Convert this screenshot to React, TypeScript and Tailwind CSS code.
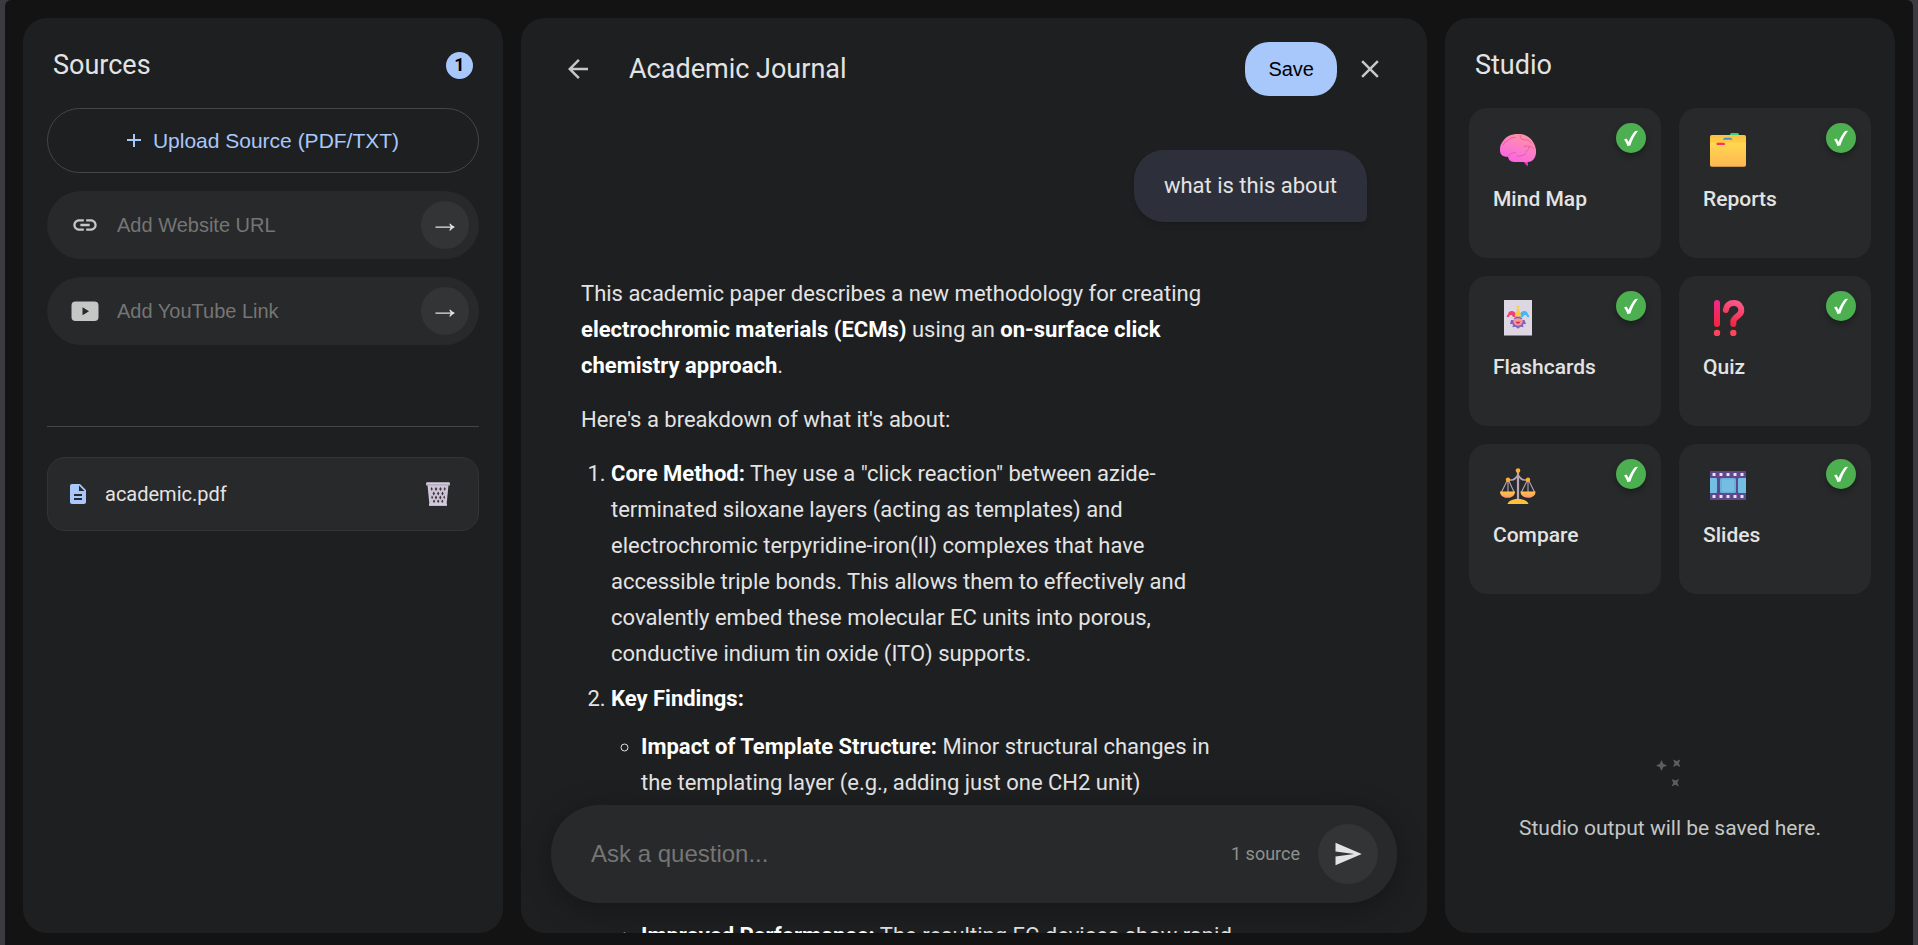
import { useState, type ReactNode } from 'react'

type StudioTool = { label: string; icon: ReactNode }

function BrainIcon() {
  return (
    <svg viewBox="0 0 36 36" className="size-9" aria-hidden="true">
      <defs>
        <linearGradient id="brain" x1="0.2" y1="1" x2="0.7" y2="0">
          <stop offset="0" stopColor="#fa62e4" />
          <stop offset="0.5" stopColor="#fc7cca" />
          <stop offset="1" stopColor="#ff93a2" />
        </linearGradient>
      </defs>
      <path d="M23 29l3.700 4.600c.6.600 1.200.3 1.200-.5V28z" fill="#e83fb8" />
      <path
        d="M18 2c4 0 7.500.8 10.500 3C32.500 8 35.500 13 36 18c.3 4-.5 7-2.500 9.500-1.500 1.700-3.500 2.500-5.500 2.500H14c-3.500 0-5.500-2-6-5.200-2.500.2-5-.5-6.500-2C0 21 0 19 0 17c0-3 1-5.500 3-8C6 4.500 11 2 18 2z"
        fill="url(#brain)"
      />
      <g fill="none" stroke="#d8498f" strokeOpacity="0.6" strokeLinecap="round">
        <path d="M3 13c1-3 3.500-3 5.500-5 1.500-2.200 4-3 7-2.500" />
        <path d="M8.500 24c1-3 4-2.500 7-3.500M17 24c4 .8 6-.5 9-2.500" />
        <path d="M20 3.500c0 3 2 4.500 5 4.300 3-.1 5 1.200 6.500 3.200" />
        <path d="M24 14.500c3-1 7-.5 9.500 2M29 15c-.2 2.500-1.500 4-3.500 5" />
      </g>
    </svg>
  )
}

function FolderIcon() {
  return (
    <svg viewBox="0 0 36 36" className="size-9" aria-hidden="true">
      <defs>
        <linearGradient id="folder" x1="0" y1="0" x2="0" y2="1">
          <stop offset="0" stopColor="#ffd94f" />
          <stop offset="1" stopColor="#ffb552" />
        </linearGradient>
      </defs>
      <rect x="20" y="1" width="9" height="5" rx="1.500" fill="#3fce7c" />
      <rect x="0" y="3" width="36" height="14" rx="1.800" fill="#f8c541" />
      <path d="M0 6h12l1.500 1.500h9L24 6.500h12v10H0z" fill="#ffc845" />
      <path d="M13 7.800c.3-1.300 1-2 2-2h5c1 0 2 .7 2.500 2z" fill="#3f8fd8" />
      <path d="M6 12.900c.3-1.500 1-2.200 2-2.200h5c1.300 0 2 .8 2.500 2.200z" fill="#f8335d" />
      <path
        d="M0 11.500c0-.6.500-1 1-1h4l2 2.400h7.500l2-2.400H35c.6 0 1 .4 1 1V33a1.800 1.800 0 0 1-1.800 1.800H1.800A1.800 1.800 0 0 1 0 33z"
        fill="url(#folder)"
      />
    </svg>
  )
}

function JokerIcon() {
  return (
    <svg viewBox="0 0 36 36" className="size-9" aria-hidden="true">
      <rect x="4" y="0" width="28" height="36" fill="#8c7b9f" />
      <rect x="4" y="0" width="28" height="35" fill="#dcd7e3" />
      <path d="M11 20h13.500l1.500 4-3 .3.500 3-3-.5-2.500 2-2.500-2-3 .5.500-3-3-.3z" fill="#8061c4" />
      <path d="M13 17c-1-3-3-2.500-4.500-.5-1.500-3.500 1-6 4-5.500 2.500.4 4 3 4 6z" fill="#f0407a" />
      <path d="M23 17c1-3 3-2.500 4.500-.5 1.500-3.500-1-6-4-5.500-2.500.4-4 3-4 6z" fill="#45b6f5" />
      <path d="M14.500 16.500L18 7l3.500 9.500z" fill="#f9cc3e" />
      <circle cx="18" cy="6.700" r="1.500" fill="#fbd34e" />
      <circle cx="8" cy="16" r="1.200" fill="#f0407a" />
      <circle cx="28" cy="16" r="1.200" fill="#45b6f5" />
      <circle cx="18" cy="21" r="4.700" fill="#f49a8e" />
      <path d="M13.500 18.500c2-2.300 7-2.300 9 0l-1 .4c-2-1-5-1-7 0z" fill="#8061c4" />
      <path d="M15.700 21.700h4.600c-.3 2.600-4.300 2.600-4.600 0z" fill="#d8265b" />
    </svg>
  )
}

function InterrobangIcon() {
  return (
    <svg viewBox="0 0 36 36" className="size-9" aria-hidden="true">
      <defs>
        <linearGradient id="bang" x1="0" y1="0" x2="0" y2="27" gradientUnits="userSpaceOnUse">
          <stop offset="0" stopColor="#f4288c" />
          <stop offset="1" stopColor="#f3263a" />
        </linearGradient>
        <linearGradient id="question" x1="30" y1="2" x2="20" y2="27" gradientUnits="userSpaceOnUse">
          <stop offset="0" stopColor="#fb5a8c" />
          <stop offset="1" stopColor="#f01f3c" />
        </linearGradient>
      </defs>
      <rect x="4" y="0" width="6" height="27" rx="3" fill="url(#bang)" />
      <path
        d="M15.800 10C16.500 5.500 19.500 3 24 3c4.500 0 7.300 3.300 7.300 7.500 0 6-8 5.500-8 11.500v2"
        fill="none"
        stroke="url(#question)"
        strokeWidth="6"
        strokeLinecap="round"
      />
      <circle cx="7" cy="33" r="3.200" fill="#ff4658" />
      <circle cx="23.300" cy="33" r="3.200" fill="#ff4658" />
    </svg>
  )
}

function ScalesIcon() {
  return (
    <svg viewBox="0 0 36 36" className="size-9" aria-hidden="true">
      <defs>
        <linearGradient id="pan" x1="0" y1="0" x2="0" y2="1">
          <stop offset="0" stopColor="#ffc83d" />
          <stop offset="1" stopColor="#ff9478" />
        </linearGradient>
      </defs>
      <g fill="none" stroke="#b9a3b5" strokeLinecap="round">
        <path d="M18 3v29" strokeWidth="2.200" />
        <path d="M8 12h3.500c3 0 4-1.500 6.500-5 2.500 3.500 3.500 5 6.500 5H28" strokeWidth="1.700" />
        <path
          d="M7.500 12L1.500 24M8 12v12M8.500 12l5.500 12M27.500 12l-6 12M28 12v12M28.500 12l6 12"
          strokeWidth="1.100"
        />
      </g>
      <circle cx="18" cy="2.500" r="2.300" fill="#ffae2e" />
      <circle cx="8" cy="11.800" r="2.200" fill="#ffae2e" />
      <circle cx="28" cy="11.800" r="2.200" fill="#ffae2e" />
      <path d="M0 23.500h15c0 4-3.200 6.300-7.500 6.300S0 27.500 0 23.500z" fill="url(#pan)" />
      <path d="M20.500 23.500h15c0 4-3.200 6.300-7.500 6.300s-7.500-2.300-7.500-6.300z" fill="url(#pan)" />
      <path d="M7.500 36c1-3.500 5.500-5 10.500-5s9.500 1.500 10.500 5z" fill="#ffc03a" />
    </svg>
  )
}

function FilmIcon() {
  const holes = [2, 9, 16, 23, 30]
  return (
    <svg viewBox="0 1 36 36" className="size-9" aria-hidden="true">
      <rect x="0" y="4" width="36" height="29" rx="0.800" fill="#60478a" />
      <path d="M0 11h5.500c1 0 1.500.5 1.500 1.500v12c0 1-.5 1.500-1.500 1.500H0z" fill="#72bfe6" />
      <rect x="10" y="11" width="16" height="15" rx="1.500" fill="#66b0dc" />
      <rect x="12" y="12.500" width="12" height="12" rx="1" fill="#76bde2" />
      <path d="M36 11h-6.500c-1 0-1.500.5-1.500 1.500v12c0 1 .5 1.500 1.500 1.500H36z" fill="#72bfe6" />
      {holes.map((x) => (
        <g key={x} fill="#e9e2f0">
          <rect x={x + 0.5} y="6" width="3" height="3" rx="0.500" />
          <rect x={x + 0.5} y="28" width="3" height="3" rx="0.500" />
        </g>
      ))}
    </svg>
  )
}

function TrashIcon() {
  return (
    <svg viewBox="0 0 24 24" className="size-6" aria-hidden="true">
      <path d="M1.500 3h21l-2 20.500h-17z" fill="#cdc4d6" />
      <g fill="#3a363f">
        <path d="M5.500 5l1.300 2-1 1.800-1.200-1.800zM10 5l1.300 2L10 9 8.700 7zM14.500 5l1.300 2-1.300 2-1.300-2zM18.800 5l1 2-1.200 1.800-1-1.800z" />
        <path d="M7.800 9.500L9 11.500l-1.200 2-1.200-2zM12.200 9.500l1.200 2-1.200 2-1.200-2zM16.500 9.500l1.200 2-1.200 2-1.200-2z" />
        <path d="M6 13.500l1.200 2L6 17l-.8-1.700zM10 13.500l1.200 2-1.200 2-1.200-2zM14.300 13.500l1.200 2-1.200 2-1.200-2zM18.300 13.500l.8 1.800-.8 1.700-1.100-1.700z" />
        <path d="M8 17.500l1.200 1.800L8 21l-1.100-1.700zM12.200 17.500l1.200 1.800-1.200 1.700-1.200-1.700zM16.300 17.500l1.100 1.800-1.100 1.700-1.100-1.700z" />
      </g>
      <rect x="0" y="0.500" width="24" height="3" rx="0.600" fill="#b8adc4" />
      <rect x="0.500" y="0.500" width="23" height="1.200" rx="0.600" fill="#ded8e5" />
      <rect x="3" y="21.500" width="18" height="2.300" rx="0.600" fill="#d5cedd" />
    </svg>
  )
}

function LinkIcon() {
  return (
    <svg viewBox="0 0 24 24" className="size-7" fill="#c4c7c5" aria-hidden="true">
      <path d="M3.900 12c0-1.710 1.390-3.100 3.100-3.100h4V7H7c-2.760 0-5 2.240-5 5s2.240 5 5 5h4v-1.900H7c-1.710 0-3.100-1.390-3.100-3.100zM8 13h8v-2H8v2zm9-6h-4v1.900h4c1.710 0 3.100 1.390 3.100 3.100s-1.390 3.100-3.100 3.100h-4V17h4c2.760 0 5-2.240 5-5s-2.240-5-5-5z" />
    </svg>
  )
}

function YouTubeIcon() {
  return (
    <svg viewBox="0 0 28 28" className="size-7" aria-hidden="true">
      <rect x="0.500" y="4.500" width="27" height="19.500" rx="4" fill="#c4c7c5" />
      <path d="M11.500 10.200v8l6.500-4z" fill="#28292a" />
    </svg>
  )
}

const STUDIO_TOOLS: StudioTool[] = [
  { label: 'Mind Map', icon: <BrainIcon /> },
  { label: 'Reports', icon: <FolderIcon /> },
  { label: 'Flashcards', icon: <JokerIcon /> },
  { label: 'Quiz', icon: <InterrobangIcon /> },
  { label: 'Compare', icon: <ScalesIcon /> },
  { label: 'Slides', icon: <FilmIcon /> },
]

function LinkRow({ icon, placeholder }: { icon: ReactNode; placeholder: string }) {
  const [value, setValue] = useState('')

  return (
    <form
      onSubmit={(event) => event.preventDefault()}
      className="flex h-[68px] items-center rounded-[36px] bg-[#28292a] pr-[10px] pl-6"
    >
      {icon}
      <input
        type="url"
        aria-label={placeholder}
        placeholder={placeholder}
        value={value}
        onChange={(event) => setValue(event.target.value)}
        className="ml-[18px] min-w-0 flex-1 bg-transparent font-['Liberation_Sans',sans-serif] text-xl text-[#e3e3e3] outline-none placeholder:text-[#757575]"
      />
      <button
        type="submit"
        aria-label={`Submit ${placeholder}`}
        className="flex size-12 cursor-pointer items-center justify-center rounded-full bg-[#333435]"
      >
        <svg viewBox="0 0 20 20" className="size-5" fill="#e3e3e3" aria-hidden="true">
          <path d="M.5 12.800h15.200c-.5.800-1 1.500-1.400 2.500l.9.500c1.300-1.500 2.700-2.500 4.300-3.200v-.8c-1.600-.7-3-1.700-4.300-3.200l-.9.500c.4 1 .9 1.700 1.400 2.500H.5z" />
        </svg>
      </button>
    </form>
  )
}

function SourcesPanel() {
  return (
    <aside className="flex w-[480px] shrink-0 flex-col rounded-3xl bg-[#1e1f20] px-6">
      <div className="flex h-[90px] items-center justify-between px-[6px] pt-1">
        <h2 className="text-[27px] text-[#e3e3e3]">Sources</h2>
        <span className="flex size-[27px] items-center justify-center rounded-full bg-[#a8c7fa] text-lg font-bold text-black">
          1
        </span>
      </div>
      <div className="flex flex-col gap-[18px]">
        <button
          type="button"
          className="flex h-[65px] cursor-pointer items-center justify-center gap-3 rounded-[36px] border border-[#444746] font-['Liberation_Sans',sans-serif] text-[21px] text-[#a8c7fa]"
        >
          <svg viewBox="0 0 14 14" className="size-[14px]" stroke="currentColor" strokeWidth="2" aria-hidden="true">
            <path d="M7 0v13M0 6h14" />
          </svg>
          Upload Source (PDF/TXT)
        </button>
        <LinkRow icon={<LinkIcon />} placeholder="Add Website URL" />
        <LinkRow icon={<YouTubeIcon />} placeholder="Add YouTube Link" />
      </div>
      <hr className="mt-[81px] mb-[30px] border-[#444746]" />
      <div className="flex h-[74px] items-center rounded-[18px] border border-[#333435] bg-[#28292a] pr-7 pl-[18px]">
        <svg viewBox="0 0 24 24" className="size-6" fill="#a8c7fa" aria-hidden="true">
          <path d="M14 2H6c-1.100 0-1.990.9-1.990 2L4 20c0 1.100.89 2 1.990 2H18c1.100 0 2-.9 2-2V8l-6-6zm2 16H8v-2h8v2zm0-4H8v-2h8v2zm-3-5V3.500L18.500 9H13z" />
        </svg>
        <span className="ml-[15px] flex-1 truncate text-xl text-[#e3e3e3]">academic.pdf</span>
        <button type="button" aria-label="Delete academic.pdf" className="cursor-pointer">
          <TrashIcon />
        </button>
      </div>
    </aside>
  )
}

function ChatPanel() {
  const [question, setQuestion] = useState('')

  return (
    <main className="relative flex min-w-0 flex-1 flex-col overflow-hidden rounded-3xl bg-[#1e1f20]">
      <header className="flex h-[102px] shrink-0 items-center px-[42px]">
        <button type="button" aria-label="Back" className="cursor-pointer">
          <svg viewBox="0 0 24 24" className="size-[30px]" fill="#c4c7c5" aria-hidden="true">
            <path d="M20 11H7.830l5.590-5.590L12 4l-8 8 8 8 1.410-1.410L7.830 13H20v-2z" />
          </svg>
        </button>
        <h1 className="ml-9 flex-1 truncate text-[27px] text-[#e3e3e3]">Academic Journal</h1>
        <button
          type="button"
          className="h-[54px] cursor-pointer rounded-3xl bg-[#a8c7fa] px-[23px] font-['Liberation_Sans',sans-serif] text-xl text-black"
        >
          Save
        </button>
        <button type="button" aria-label="Close" className="ml-[18px] cursor-pointer">
          <svg viewBox="0 0 24 24" className="size-[30px]" fill="#c4c7c5" aria-hidden="true">
            <path d="M19 6.410L17.590 5 12 10.590 6.410 5 5 6.410 10.590 12 5 17.590 6.410 19 12 13.410 17.590 19 19 17.590 13.410 12z" />
          </svg>
        </button>
      </header>

      <div className="flex min-h-0 flex-1 flex-col overflow-hidden px-[60px] pt-[30px] text-[22px] leading-9 text-[#e3e3e3]">
        <p className="shrink-0 self-end rounded-[30px] rounded-br-md bg-[#2d303b] px-[30px] py-[18px] shadow-md">
          what is this about
        </p>
        <article className="mt-[54px] max-w-[84%] shrink-0">
          <p>
            This academic paper describes a new methodology for creating{' '}
            <strong className="text-white">electrochromic materials (ECMs)</strong> using an{' '}
            <strong className="text-white">on-surface click chemistry approach</strong>.
          </p>
          <p className="mt-[18px]">Here's a breakdown of what it's about:</p>
          <ol className="mt-[18px] list-decimal pl-[30px]">
            <li>
              <strong className="text-white">Core Method:</strong> They use a "click reaction" between
              azide-terminated siloxane layers (acting as templates) and electrochromic terpyridine-iron(II)
              complexes that have accessible triple bonds. This allows them to effectively and covalently embed
              these molecular EC units into porous, conductive indium tin oxide (ITO) supports.
            </li>
            <li className="mt-[9px]">
              <strong className="text-white">Key Findings:</strong>
              <ul className="mt-3 list-[circle] pl-[30px]">
                <li className="min-h-[180px]">
                  <strong className="text-white">Impact of Template Structure:</strong> Minor structural changes
                  in the templating layer (e.g., adding just one CH2 unit)
                </li>
                <li className="mt-[9px]">
                  <strong className="text-white">Improved Performance:</strong> The resulting EC devices show
                  rapid
                </li>
              </ul>
            </li>
          </ol>
        </article>
      </div>

      {/* Composer floats over the scrolling conversation */}
      <form
        onSubmit={(event) => event.preventDefault()}
        className="absolute inset-x-[30px] bottom-[30px] flex h-[98px] items-center rounded-[48px] bg-[#28292a] pr-[19px] pl-10 shadow-[0_6px_30px_rgba(0,0,0,0.3)]"
      >
        <input
          type="text"
          aria-label="Ask a question"
          placeholder="Ask a question..."
          value={question}
          onChange={(event) => setQuestion(event.target.value)}
          className="min-w-0 flex-1 bg-transparent font-['Liberation_Sans',sans-serif] text-2xl text-[#e3e3e3] outline-none placeholder:text-[#757575]"
        />
        <span className="text-lg text-[#8e918f]">1 source</span>
        <button
          type="submit"
          aria-label="Send"
          className="ml-[18px] flex size-[60px] cursor-pointer items-center justify-center rounded-full bg-[#333435]"
        >
          <svg viewBox="0 0 24 24" className="size-[30px]" fill="#e3e3e3" aria-hidden="true">
            <path d="M2.010 21L23 12 2.010 3 2 10l15 2-15 2z" />
          </svg>
        </button>
      </form>
    </main>
  )
}

function StudioPanel() {
  return (
    <aside className="flex w-[450px] shrink-0 flex-col rounded-3xl bg-[#1e1f20] px-6">
      <div className="flex h-[90px] items-center px-[6px] pt-1">
        <h2 className="text-[27px] text-[#e3e3e3]">Studio</h2>
      </div>
      <div className="grid grid-cols-2 gap-[18px]">
        {STUDIO_TOOLS.map((tool) => (
          <button
            key={tool.label}
            type="button"
            className="relative flex h-[150px] cursor-pointer flex-col items-start rounded-[18px] bg-[#28292a] px-6 pt-6 text-left"
          >
            <span className="pl-[7px]">{tool.icon}</span>
            <span className="mt-4 text-[21px] leading-[30px] font-medium text-[#e3e3e3]">{tool.label}</span>
            <span className="absolute top-[15px] right-[15px] flex size-[30px] items-center justify-center rounded-full bg-[#4caf50] shadow-[0_3px_6px_rgba(0,0,0,0.3)]">
              <svg viewBox="0 0 30 30" className="size-[30px]" fill="#fff" aria-hidden="true">
                <path d="M8 16.500l2.500-1c.9 1.200 1.500 2.300 2 3.600 1.800-4.600 4-8 6.600-11l2.900-.4c-3.500 4.500-5.900 9-7.600 14.700l-3 .6c-.8-2.500-1.800-4.500-3.400-6.500z" />
              </svg>
            </span>
          </button>
        ))}
      </div>
      <div className="mt-auto flex flex-col items-center gap-6 pb-[90px]">
        <svg viewBox="0 0 36 36" className="size-9" fill="#5c5e5d" aria-hidden="true">
          <path d="M9.500 7l1.700 3.800L15 12.500l-3.800 1.700L9.500 18l-1.700-3.800L4 12.500l3.800-1.700z" />
          <path d="M21 6.500l3.700 1.600 3.700-1.600-1.600 3.700 1.600 3.700-3.700-1.600-3.700 1.600 1.600-3.700z" />
          <path d="M19.600 26l3.700 1.600L27 26l-1.600 3.700 1.600 3.700-3.700-1.600-3.700 1.600 1.600-3.700z" />
        </svg>
        <p className="text-center text-[21px] leading-[30px] text-[#c4c7c5]">Studio output will be saved here.</p>
      </div>
    </aside>
  )
}

export default function App() {
  return (
    <div className="h-screen overflow-hidden bg-[#3b3a40] px-[5px] font-[Roboto,sans-serif]">
      <div className="flex h-full gap-[18px] rounded-t-md bg-[#131314] px-[18px] pt-[18px] pb-3">
        <SourcesPanel />
        <ChatPanel />
        <StudioPanel />
      </div>
    </div>
  )
}
